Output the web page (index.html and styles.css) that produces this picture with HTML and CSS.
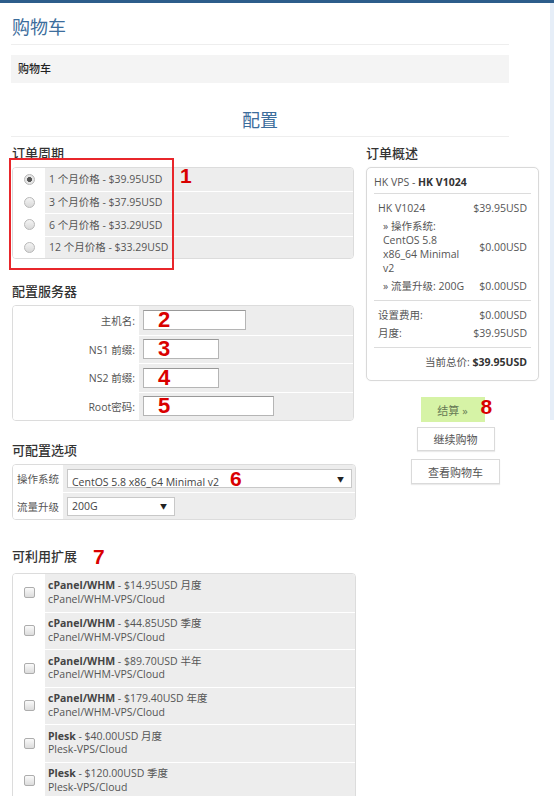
FILE: index.html
```html
<!DOCTYPE html>
<html lang="zh-CN">
<head>
<meta charset="utf-8">
<title>购物车</title>
<link rel="stylesheet" href="styles.css">
</head>
<body>
<div class="topbar"></div>
<div class="page">
  <main class="main">
    <header class="head">
      <h1 class="title">购物车</h1>
      <div class="crumb">购物车</div>
      <h2 class="subtitle">配置</h2>
    </header>

    <div class="cols">
      <div class="left">
        <h3 class="sec-h first">订单周期</h3>
        <div class="mark">
          <div class="box narrow">
            <div class="row cyc"><div class="ctl"><input class="radio" type="radio" name="cycle" checked></div><div class="val">1 个月价格 - $39.95USD</div></div>
            <div class="row cyc"><div class="ctl"><input class="radio" type="radio" name="cycle"></div><div class="val">3 个月价格 - $37.95USD</div></div>
            <div class="row cyc"><div class="ctl"><input class="radio" type="radio" name="cycle"></div><div class="val">6 个月价格 - $33.29USD</div></div>
            <div class="row cyc"><div class="ctl"><input class="radio" type="radio" name="cycle"></div><div class="val">12 个月价格 - $33.29USD</div></div>
          </div>
          <div class="redbox"></div>
          <span class="num n1">1</span>
        </div>

        <h3 class="sec-h s2">配置服务器</h3>
        <div class="box narrow">
          <div class="row srv"><div class="lbl">主机名:</div><div class="val"><div class="field w-host"><span class="num">2</span></div></div></div>
          <div class="row srv"><div class="lbl">NS1 前缀:</div><div class="val"><div class="field w-ns"><span class="num">3</span></div></div></div>
          <div class="row srv"><div class="lbl">NS2 前缀:</div><div class="val"><div class="field w-ns"><span class="num">4</span></div></div></div>
          <div class="row srv"><div class="lbl">Root密码:</div><div class="val"><div class="field w-root"><span class="num">5</span></div></div></div>
        </div>

        <h3 class="sec-h s3">可配置选项</h3>
        <div class="box">
          <div class="row opt"><div class="lbl">操作系统</div><div class="val"><div class="select w-os"><span>CentOS 5.8 x86_64 Minimal v2<span class="num n6">6</span></span><span class="arrow">▼</span></div></div></div>
          <div class="row opt"><div class="lbl">流量升级</div><div class="val"><div class="select w-bw"><span>200G</span><span class="arrow">▼</span></div></div></div>
        </div>

        <h3 class="sec-h s4">可利用扩展<span class="num n7">7</span></h3>
        <div class="box ext-box">
          <div class="row ext"><div class="ctl"><input class="check" type="checkbox"></div><div class="val"><div><b>cPanel/WHM</b> - $14.95USD 月度</div><div>cPanel/WHM-VPS/Cloud</div></div></div>
          <div class="row ext"><div class="ctl"><input class="check" type="checkbox"></div><div class="val"><div><b>cPanel/WHM</b> - $44.85USD 季度</div><div>cPanel/WHM-VPS/Cloud</div></div></div>
          <div class="row ext"><div class="ctl"><input class="check" type="checkbox"></div><div class="val"><div><b>cPanel/WHM</b> - $89.70USD 半年</div><div>cPanel/WHM-VPS/Cloud</div></div></div>
          <div class="row ext"><div class="ctl"><input class="check" type="checkbox"></div><div class="val"><div><b>cPanel/WHM</b> - $179.40USD 年度</div><div>cPanel/WHM-VPS/Cloud</div></div></div>
          <div class="row ext"><div class="ctl"><input class="check" type="checkbox"></div><div class="val"><div><b>Plesk</b> - $40.00USD 月度</div><div>Plesk-VPS/Cloud</div></div></div>
          <div class="row ext"><div class="ctl"><input class="check" type="checkbox"></div><div class="val"><div><b>Plesk</b> - $120.00USD 季度</div><div>Plesk-VPS/Cloud</div></div></div>
        </div>
      </div>

      <aside class="right">
        <h3 class="sec-h first">订单概述</h3>
        <div class="summary">
          <div class="sum-title">HK VPS - <b>HK V1024</b></div>
          <div class="sum-group g1">
            <div class="srow"><span>HK V1024</span><span>$39.95USD</span></div>
            <div class="srow sub"><span>» 操作系统:<br>CentOS 5.8<br>x86_64 Minimal<br>v2</span><span>$0.00USD</span></div>
            <div class="srow sub"><span>» 流量升级: 200G</span><span>$0.00USD</span></div>
          </div>
          <div class="sum-group">
            <div class="srow"><span>设置费用:</span><span>$0.00USD</span></div>
            <div class="srow"><span>月度:</span><span>$39.95USD</span></div>
          </div>
          <div class="sum-group">
            <div class="srow total"><span>当前总价: <b>$39.95USD</b></span></div>
          </div>
        </div>
        <div class="actions">
          <div class="checkout-wrap">
            <button class="btn checkout" type="button">结算 »</button>
            <span class="num n8">8</span>
          </div>
          <button class="btn plain b-cont" type="button">继续购物</button>
          <button class="btn plain b-view" type="button">查看购物车</button>
        </div>
      </aside>
    </div>
  </main>
  <div class="strip"></div>
</div>
</body>
</html>
```

FILE: styles.css
```css
* { box-sizing: border-box; }

body {
  margin: 0;
  background: #fff;
  color: #555;
  font-family: "Open Sans", "Noto Sans CJK SC", sans-serif;
  font-size: 10.5px;
}

.topbar {
  height: 3px;
  background: #2d5d8b;
}

.page {
  display: flex;
  align-items: flex-start;
}

.main {
  flex: 1;
  padding-left: 11px;
}

.strip {
  width: 4px;
  height: 417px;
  background: #e6eef8;
}

/* header */
.head { width: 498px; }

.title {
  margin: 0;
  padding: 13px 0 6px 1px;
  font-size: 18px;
  line-height: 22px;
  font-weight: normal;
  color: #3c6d9c;
  border-bottom: 1px solid #eee;
}

.crumb {
  margin-top: 10px;
  height: 28px;
  line-height: 28px;
  padding-left: 7px;
  background: #f4f4f4;
  color: #222;
  font-size: 11px;
  font-weight: 500;
}

.subtitle {
  margin: 26px 0 0;
  padding-bottom: 5px;
  font-size: 18px;
  line-height: 22px;
  font-weight: normal;
  text-align: center;
  color: #3c6d9c;
  border-bottom: 1px solid #eee;
}

/* columns */
.cols {
  display: flex;
  gap: 10px;
  margin-top: 8px;
  padding-left: 1px;
}

.left { width: 344px; }
.right { width: 173px; }

.sec-h {
  margin: 0 0 6px;
  font-size: 13px;
  line-height: 16px;
  font-weight: 500;
  color: #333;
}
.sec-h.s2 { margin-top: 24px; }
.sec-h.s3 { margin-top: 21px; }
.sec-h.s4 { margin-top: 27px; }

/* boxes */
.box {
  border: 1px solid #dcdcdc;
  border-radius: 4px;
  overflow: hidden;
  background: #fff;
}
.box.narrow { width: 342px; }

.row { display: flex; }
.row + .row .val { border-top: 1px solid #fff; }
.row + .row .ctl,
.row + .row .lbl { border-top: 1px solid #fff; }

.ctl {
  width: 32px;
  flex: none;
  display: flex;
  align-items: center;
  justify-content: center;
  background: #fff;
}

.lbl {
  flex: none;
  display: flex;
  align-items: center;
  background: #fff;
}

.val {
  flex: 1;
  display: flex;
  align-items: center;
  background: #ededed;
  padding-left: 4px;
}

.cyc { height: 22.5px; }
.cyc .val { line-height: 14px; }

.srv { height: 28.5px; }
.srv .lbl { width: 126px; justify-content: flex-end; padding-right: 4px; }

.opt { height: 27px; }
.opt .lbl { width: 50px; justify-content: center; }

.ext { height: 37.5px; }
.ext .val {
  flex-direction: column;
  align-items: flex-start;
  justify-content: center;
  padding-left: 3px;
  line-height: 13.5px;
}
.ext .val b { color: #444; }

/* controls */
.radio {
  appearance: none;
  -webkit-appearance: none;
  margin: 0;
  width: 11px;
  height: 11px;
  border-radius: 50%;
  border: 1px solid #b8b8b8;
  background: linear-gradient(#f4f4f4, #d9d9d9);
}
.radio:checked {
  background: radial-gradient(circle, #555 0 2.2px, #e6e6e6 2.8px);
}

.check {
  appearance: none;
  -webkit-appearance: none;
  margin: 0;
  width: 11px;
  height: 11px;
  border-radius: 2px;
  border: 1px solid #adadad;
  background: linear-gradient(#fafafa, #dcdcdc);
}

.field {
  height: 20px;
  display: flex;
  align-items: center;
  padding-left: 14px;
  background: #fff;
  border: 1px solid #b5b5b5;
  border-top-color: #999;
}
.w-host { width: 103px; }
.w-ns { width: 76px; }
.w-root { width: 131px; }

.select {
  height: 19px;
  display: flex;
  align-items: center;
  justify-content: space-between;
  padding: 0 7px 0 4px;
  background: #fff;
  border: 1px solid #c8c8c8;
  color: #444;
  font-size: 10.5px;
}
.w-os { width: 285px; }
.w-bw { width: 108px; }
.arrow { font-size: 7px; color: #222; }

/* annotation numbers */
.num {
  color: #d90000;
  font-family: "Liberation Sans", Arial, sans-serif;
  font-weight: bold;
  font-size: 22px;
  line-height: 20px;
}

.mark { position: relative; }
.redbox {
  position: absolute;
  left: -3px;
  top: -9px;
  width: 165px;
  height: 112px;
  border: 2px solid #e8262b;
}
.n1 {
  position: absolute;
  left: 168px;
  top: -1px;
  font-size: 21px;
}
.n6 { font-size: 21px; margin-left: 11px; }
.n7 { font-size: 21px; margin-left: 16px; vertical-align: -3px; }
.n8 {
  position: absolute;
  left: 60px;
  top: 0;
  font-size: 21px;
}

/* summary */
.summary {
  border: 1px solid #d9d9d9;
  border-radius: 5px;
  padding: 7px 7px 9px;
  background: #fff;
  box-shadow: 0 0 2px rgba(0, 0, 0, 0.06);
}

.sum-title {
  line-height: 14px;
  padding-bottom: 4px;
}
.sum-title b { color: #333; }

.sum-group {
  border-top: 1px solid #dcdcdc;
  padding-top: 5px;
}
.sum-group.g1 { padding-bottom: 5px; }
.sum-group:nth-child(3) { padding-bottom: 5px; }

.srow {
  display: flex;
  justify-content: space-between;
  align-items: center;
  padding: 2px 4px;
  line-height: 14px;
}
.srow.sub { padding-left: 9px; }
.srow.total { justify-content: flex-end; }
.srow.total b { color: #333; }

/* actions */
.actions {
  margin-top: 16px;
  display: flex;
  flex-direction: column;
  align-items: center;
}

.btn {
  font-family: "Open Sans", "Noto Sans CJK SC", sans-serif;
  font-size: 11px;
  color: #555;
  margin: 0;
  padding: 0;
  cursor: pointer;
}

.checkout-wrap { position: relative; }

.checkout {
  width: 64px;
  height: 25px;
  border: none;
  background: #d6f3a6;
  color: #667a55;
}

.plain {
  height: 24px;
  background: #fff;
  border: 1px solid #dadada;
  box-shadow: 0 1px 1px rgba(0, 0, 0, 0.08);
  margin-left: 6px;
}
.b-cont { width: 78px; margin-top: 5px; }
.b-view { width: 89px; height: 25px; margin-top: 8px; }
```
